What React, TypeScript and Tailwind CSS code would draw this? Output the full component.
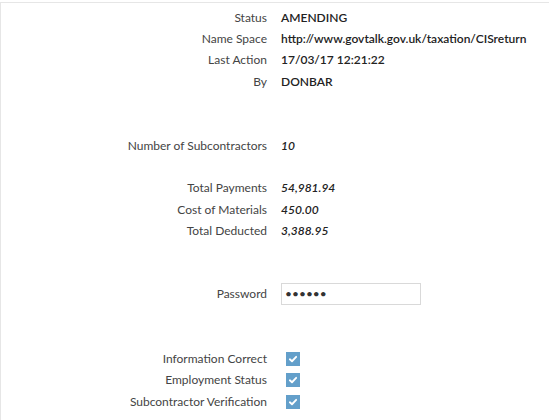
import React from 'react';

function Check() {
  return (
    <span className="flex h-[14px] w-[14px] items-center justify-center bg-[#639fca]">
      <svg viewBox="0 0 12 12" className="h-[10px] w-[10px]">
        <path d="M2.2 6.3 L4.8 8.7 L9.8 3.4" fill="none" stroke="#fff" strokeWidth="2.2" strokeLinecap="round" strokeLinejoin="round" />
      </svg>
    </span>
  );
}

function Line({ label, children }: { label: string; children: React.ReactNode }) {
  return (
    <div className="flex h-[21.33px] items-center">
      <div className="w-[266px] shrink-0 text-right text-[#444]">{label}</div>
      <div className="ml-[14px] flex items-center text-[#222]">{children}</div>
    </div>
  );
}

function Gap({ rows }: { rows: number }) {
  return <div style={{ height: rows * 21.33 }} />;
}

export default function App() {
  return (
    <div className="min-h-screen bg-white" style={{ fontFamily: 'Lato, "Open Sans", sans-serif' }}>
      <div className="mt-[2px] min-h-[418px] border-l border-t border-[#e6e6e6] pt-[4px] text-[12px]">
        <Line label="Status"><span className="font-semibold">AMENDING</span></Line>
        <Line label="Name Space"><span className="font-semibold">http://www.govtalk.gov.uk/taxation/CISreturn</span></Line>
        <Line label="Last Action"><span className="font-semibold">17/03/17 12:21:22</span></Line>
        <Line label="By"><span className="font-semibold">DONBAR</span></Line>
        <Gap rows={2} />
        <Line label="Number of Subcontractors"><span className="font-semibold italic">10</span></Line>
        <Gap rows={1} />
        <Line label="Total Payments"><span className="font-semibold italic">54,981.94</span></Line>
        <Line label="Cost of Materials"><span className="font-semibold italic">450.00</span></Line>
        <Line label="Total Deducted"><span className="font-semibold italic">3,388.95</span></Line>
        <Gap rows={2} />
        <div className="-mt-[1px] mb-[1px]">
          <Line label="Password">
            <input
              type="password"
              readOnly
              defaultValue="secret"
              className="h-[22px] w-[140px] border border-[#d9d9d9] bg-white px-[3px] text-[12px] text-[#333] outline-none"
            />
          </Line>
        </div>
        <Gap rows={2} />
        <Line label="Information Correct"><span className="ml-[5px]"><Check /></span></Line>
        <Line label="Employment Status"><span className="ml-[5px]"><Check /></span></Line>
        <Line label="Subcontractor Verification"><span className="ml-[5px]"><Check /></span></Line>
      </div>
    </div>
  );
}
